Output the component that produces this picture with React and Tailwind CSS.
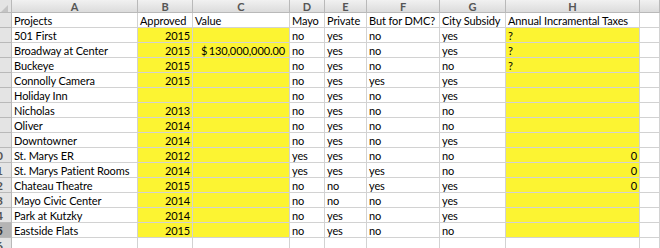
import React from "react";

const cols = ["A", "B", "C", "D", "E", "F", "G", "H", ""];
const widths = "grid-cols-[12px_126px_55px_97px_35px_42px_73px_66px_134px_1fr]";

const rows = [
  ["Projects", "Approved", "Value", "Mayo", "Private", "But for DMC?", "City Subsidy", "Annual Incramental Taxes"],
  ["501 First", "2015", "", "no", "yes", "no", "yes", "?"],
  ["Broadway at Center", "2015", "130,000,000.00", "no", "yes", "no", "yes", "?"],
  ["Buckeye", "2015", "", "no", "yes", "no", "no", "?"],
  ["Connolly Camera", "2015", "", "no", "yes", "yes", "yes", ""],
  ["Holiday Inn", "", "", "no", "yes", "no", "yes", ""],
  ["Nicholas", "2013", "", "no", "yes", "no", "no", ""],
  ["Oliver", "2014", "", "no", "yes", "no", "no", ""],
  ["Downtowner", "2014", "", "no", "yes", "no", "yes", ""],
  ["St. Marys ER", "2012", "", "yes", "yes", "no", "no", "0"],
  ["St. Marys Patient Rooms", "2014", "", "yes", "yes", "yes", "no", "0"],
  ["Chateau Theatre", "2015", "", "no", "no", "yes", "yes", "0"],
  ["Mayo Civic Center", "2014", "", "no", "no", "no", "yes", ""],
  ["Park at Kutzky", "2014", "", "no", "yes", "no", "yes", ""],
  ["Eastside Flats", "2015", "", "no", "yes", "no", "no", ""],
  ["", "", "", "", "", "", "", ""],
];

function RowHead({ n, selected }) {
  return (
    <div
      className={`h-[15px] overflow-hidden border-r border-b border-[#b9b9b9] ${
        selected ? "bg-[#b4b4b4] text-[#333]" : "bg-[#e4e4e4] text-[#555]"
      }`}
    >
      <div className="ml-[-19px] w-[30px] text-center text-[12px] leading-[15px] font-bold">{n}</div>
    </div>
  );
}

function Cell({ children, yellow, right, className = "" }) {
  return (
    <div
      className={`h-[15px] border-r border-b border-[#d2d2d2] px-[2px] text-[11px] tracking-[-0.1px] leading-[15px] whitespace-nowrap overflow-visible ${
        yellow ? "bg-[#fcf432]" : "bg-white"
      } ${right ? "text-right" : ""} ${className}`}
    >
      {children}
    </div>
  );
}

export default function App() {
  return (
    <div className="w-[660px] h-[248px] overflow-hidden bg-white text-black font-['Lato','Liberation_Sans',sans-serif]">
      <div className={`grid ${widths}`}>
        <div className="h-[13px] border-r border-b border-[#b9b9b9] bg-[#e4e4e4] relative">
          <svg className="absolute left-0 top-[4px]" width="9" height="9" viewBox="0 0 9 9">
            <polygon points="1,8 8,8 8,1" fill="#c4c4c4" />
          </svg>
        </div>
        {cols.map((c, i) => (
          <div
            key={i}
            className="h-[13px] border-r border-b border-[#b9b9b9] bg-gradient-to-b from-[#f1f1f1] to-[#dcdcdc] text-center text-[11px] leading-[13px] font-bold text-[#555]"
          >
            {c}
          </div>
        ))}

        {rows.map((r, ri) => {
          const hl = ri >= 1 && ri <= 14;
          return (
            <React.Fragment key={ri}>
              <RowHead n={ri + 1} selected={ri === 14} />
              <Cell>{r[0]}</Cell>
              <Cell yellow={hl} right={ri > 0}>{r[1]}</Cell>
              <Cell yellow={hl}>
                {ri > 0 && r[2] ? (
                  <div className="flex justify-between pl-[6px] pr-[2px]">
                    <span>$</span>
                    <span>{r[2]}</span>
                  </div>
                ) : (
                  r[2]
                )}
              </Cell>
              <Cell>{r[3]}</Cell>
              <Cell>{r[4]}</Cell>
              <Cell>{r[5]}</Cell>
              <Cell>{r[6]}</Cell>
              <Cell yellow={hl} right={r[7] === "0"}>{r[7]}</Cell>
              <Cell />
            </React.Fragment>
          );
        })}
      </div>
    </div>
  );
}
